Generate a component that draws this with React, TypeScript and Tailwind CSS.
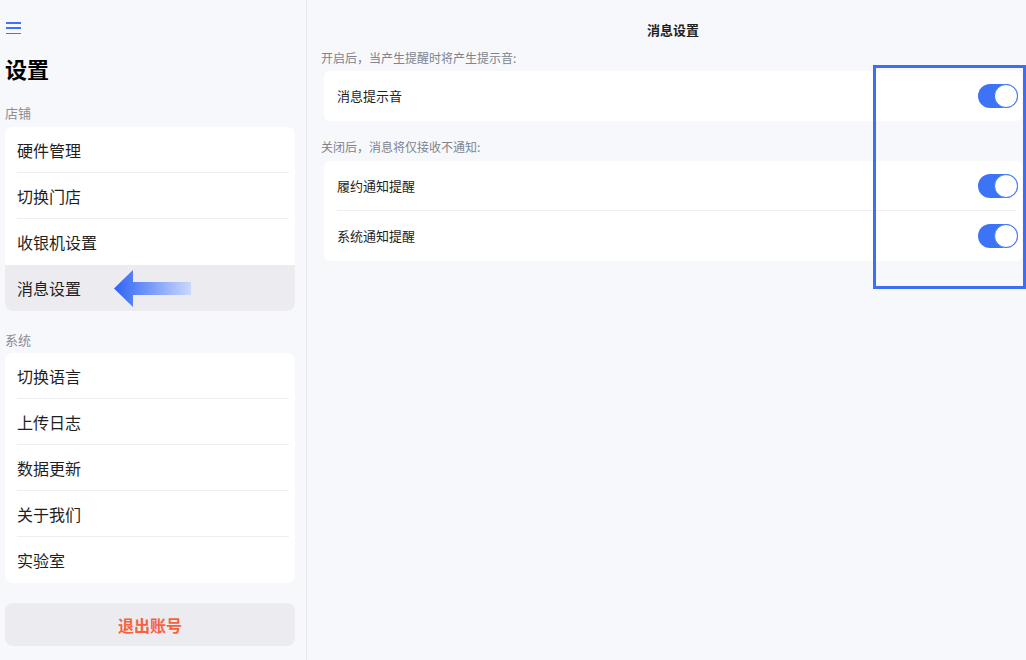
import React from 'react'

const FONT = { fontFamily: '"Noto Sans CJK SC", "Noto Sans", sans-serif' }

const storeItems = ['硬件管理', '切换门店', '收银机设置', '消息设置']
const systemItems = ['切换语言', '上传日志', '数据更新', '关于我们', '实验室']

function Toggle() {
  return (
    <div className="w-[40px] h-[24px] rounded-full bg-[#3d74f7] flex items-center justify-end">
      <div className="w-[24px] h-[24px] rounded-full bg-white border-[1.5px] border-[#3d74f7]" />
    </div>
  )
}

function MenuCard({ items, active }: { items: string[]; active?: string }) {
  return (
    <div className="mx-[5px] w-[290px] bg-white rounded-lg overflow-hidden">
      {items.map((item, i) => {
        const showLine = i < items.length - 1 && item !== active && items[i + 1] !== active
        return (
          <div key={item} className={`h-[46px] flex flex-col ${item === active ? 'bg-[#ebebf0]' : ''}`}>
            <div className="flex-1 flex items-center px-[12px] text-[16px] text-[#1f1f1f]">{item}</div>
            <div className={`ml-[12px] mr-[6px] h-px ${showLine ? 'bg-[#efeff2]' : ''}`} />
          </div>
        )
      })}
    </div>
  )
}

function SettingRow({ label, divider }: { label: string; divider?: boolean }) {
  return (
    <div className="h-[50px] flex flex-col">
      <div className="flex-1 flex items-center justify-between pl-[13px] pr-[4px] text-[13px] text-[#1f1f1f]">
        <span>{label}</span>
        <Toggle />
      </div>
      <div className={`ml-[13px] mr-[6px] h-px ${divider ? 'bg-[#efeff2]' : ''}`} />
    </div>
  )
}

export default function App() {
  return (
    <div className="relative w-[1026px] h-[660px] bg-[#f7f8fc] flex overflow-hidden" style={FONT}>
      {/* sidebar */}
      <div className="w-[307px] shrink-0 border-r border-[#e8e9ee] flex flex-col">
        <div className="pt-[22px] pl-[6px]">
          <div className="w-[15px] h-[12px] flex flex-col justify-between">
            <div className="h-[1.5px] bg-[#3d74f7]" />
            <div className="h-[1.5px] bg-[#3d74f7]" />
            <div className="h-[1.5px] bg-[#3d74f7]" />
          </div>
        </div>
        <div className="pl-[5px] mt-[19px] text-[22px] font-bold leading-[30px] text-black">设置</div>
        <div className="pl-[5px] mt-[21px] text-[13px] leading-[18px] text-[#8a8c94]">店铺</div>
        <div className="mt-[5px]">
          <MenuCard items={storeItems} active="消息设置" />
        </div>
        <div className="pl-[5px] mt-[20px] text-[13px] leading-[18px] text-[#8a8c94]">系统</div>
        <div className="mt-[4px]">
          <MenuCard items={systemItems} />
        </div>
        <div className="mx-[5px] mt-[20px] w-[290px] h-[43px] rounded-lg bg-[#ebebf0] flex items-center justify-center text-[16px] font-bold text-[#f5623e]">
          退出账号
        </div>
      </div>

      {/* content */}
      <div className="flex-1 pl-[17px] pr-[4px]">
        <div className="h-[62px] flex items-center justify-center text-[13px] font-bold text-[#1f1f1f] pb-[2px]">
          消息设置
        </div>
        <div className="-mt-[12px] -ml-[3px] text-[12px] leading-[16px] text-[#80838c]">
          开启后，当产生提醒时将产生提示音:
        </div>
        <div className="mt-[5px] bg-white rounded-md">
          <SettingRow label="消息提示音" />
        </div>
        <div className="mt-[18px] -ml-[3px] text-[12px] leading-[16px] text-[#80838c]">
          关闭后，消息将仅接收不通知:
        </div>
        <div className="mt-[6px] bg-white rounded-md">
          <SettingRow label="履约通知提醒" divider />
          <SettingRow label="系统通知提醒" />
        </div>
      </div>

      {/* annotation: arrow */}
      <svg className="absolute left-[114px] top-[270px]" width="78" height="38" viewBox="0 0 78 38">
        <defs>
          <linearGradient id="ag" x1="0" y1="0" x2="1" y2="0">
            <stop offset="0" stopColor="#2f63f5" />
            <stop offset="1" stopColor="#c9d9fd" />
          </linearGradient>
        </defs>
        <path d="M0 18.5 L19 0 L19 12 L77 12 L77 25 L19 25 L19 37 Z" fill="url(#ag)" />
      </svg>

      {/* annotation: highlight box */}
      <div className="absolute left-[873px] top-[65px] w-[153px] h-[224px] border-[3px] border-[#3c6ff5]" />
    </div>
  )
}
